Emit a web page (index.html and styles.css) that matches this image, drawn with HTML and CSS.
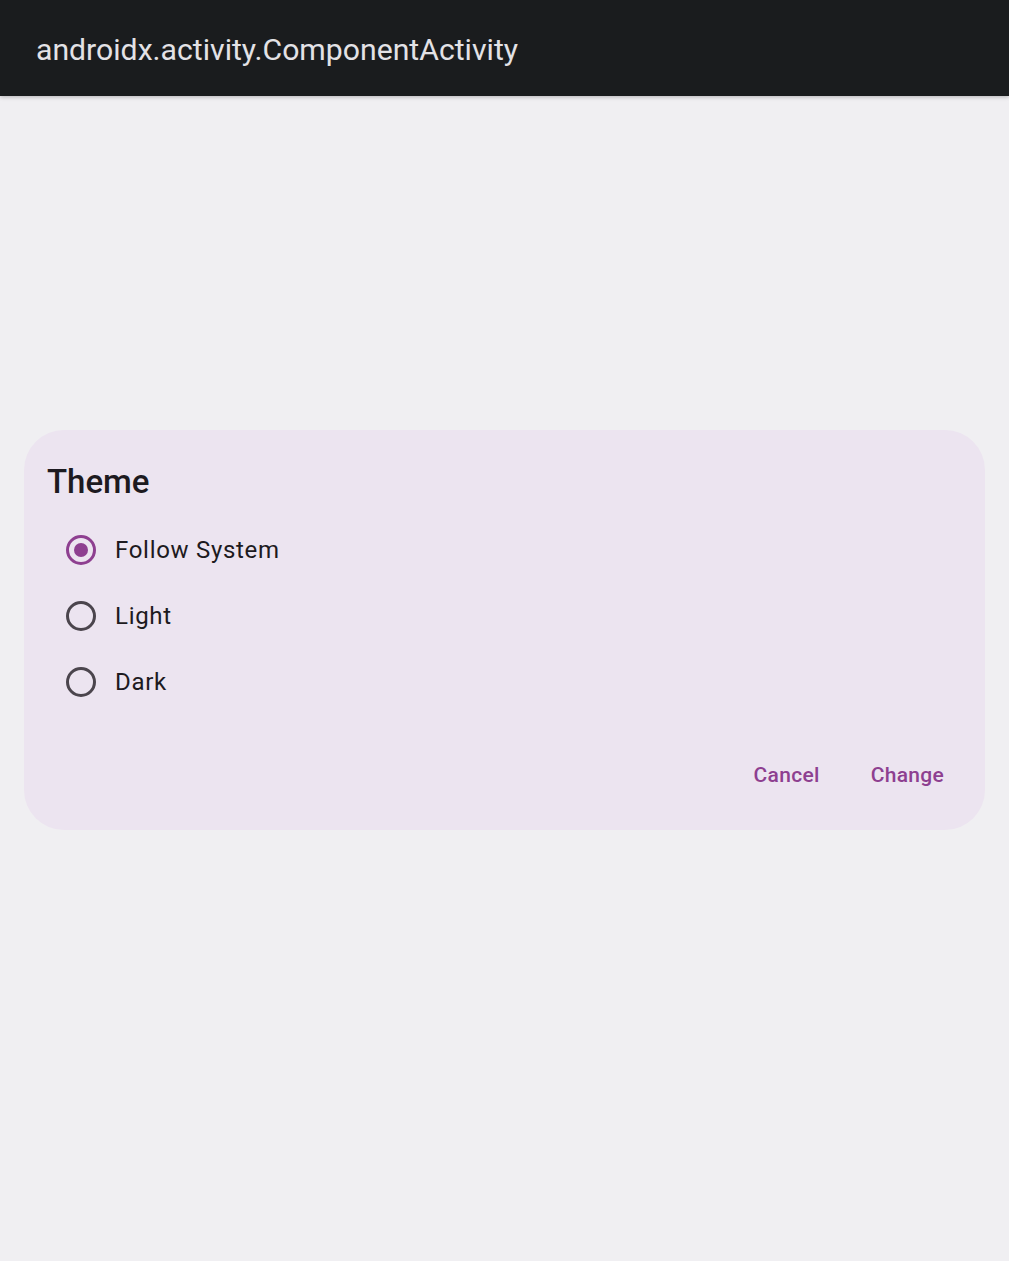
FILE: index.html
```html
<!DOCTYPE html>
<html>
<head>
<meta charset="utf-8">
<link rel="stylesheet" href="styles.css">
</head>
<body>
<header class="appbar"><span class="appbar-title">androidx.activity.ComponentActivity</span></header>
<main class="content">
  <section class="dialog">
    <h2 class="dialog-title">Theme</h2>
    <div class="options">
      <div class="option"><span class="radio radio-on"><span class="dot"></span></span><span class="label">Follow System</span></div>
      <div class="option"><span class="radio"></span><span class="label">Light</span></div>
      <div class="option"><span class="radio"></span><span class="label">Dark</span></div>
    </div>
    <div class="actions">
      <span class="btn">Cancel</span>
      <span class="btn">Change</span>
    </div>
  </section>
</main>
</body>
</html>
```
FILE: styles.css
```css
html, body {
  margin: 0;
  padding: 0;
  height: 100%;
}
body {
  background: #f0eff2;
  font-family: Roboto, "Noto Sans", sans-serif;
  display: flex;
  flex-direction: column;
}
.appbar {
  height: 96px;
  background: #1a1c1e;
  display: flex;
  align-items: center;
  padding-left: 36px;
  box-shadow: 0 1px 4px rgba(0,0,0,0.25);
  position: relative;
  z-index: 1;
}
.appbar-title {
  color: #e3e2e6;
  font-size: 30.2px;
  margin-top: 2px;
}
.content {
  flex: 1;
  padding: 334px 24px 0 24px;
}
.dialog {
  background: #ece4f0;
  border-radius: 40px;
  height: 400px;
  box-sizing: border-box;
  padding: 30px 41px 0 23px;
  display: flex;
  flex-direction: column;
}
.dialog-title {
  margin: 0;
  font-size: 33px;
  font-weight: 500;
  color: #1d1a20;
  line-height: 44px;
}
.options {
  margin-top: 13px;
  display: flex;
  flex-direction: column;
}
.option {
  height: 66px;
  display: flex;
  align-items: center;
  padding-left: 19px;
}
.radio {
  width: 30px;
  height: 30px;
  box-sizing: border-box;
  border: 3px solid #4b454d;
  border-radius: 50%;
  display: flex;
  align-items: center;
  justify-content: center;
  margin-right: 19px;
}
.radio-on {
  border-color: #8e3f90;
}
.dot {
  width: 14px;
  height: 14px;
  border-radius: 50%;
  background: #8e3f90;
}
.label {
  font-size: 24px;
  letter-spacing: 0.7px;
  color: #1d1a20;
}
.actions {
  margin-top: 48px;
  display: flex;
  justify-content: flex-end;
  gap: 51px;
}
.btn {
  font-size: 21px;
  font-weight: 500;
  color: #8e3f90;
  letter-spacing: 0.3px;
}
```
